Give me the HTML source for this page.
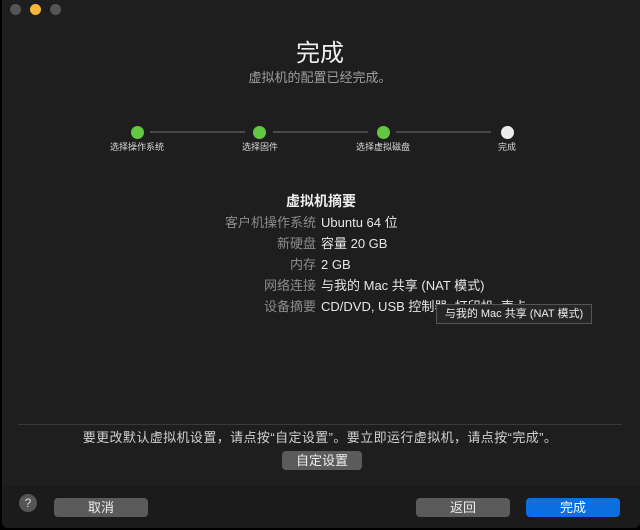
<!DOCTYPE html>
<html><head><meta charset="utf-8"><style>
body{margin:0;width:640px;height:530px;background:#000;overflow:hidden;font-family:"Liberation Sans","Noto Sans CJK SC",sans-serif;}
.win{position:absolute;left:2px;top:0;width:638px;height:528px;background:#1e1e1e;border-radius:0 0 6px 6px;}
.a{position:absolute;white-space:nowrap;}
.dot{position:absolute;width:13px;height:13px;border-radius:50%;background:#62c843;}
.ln{position:absolute;height:2px;background:#4a4a4a;top:131px;}
.sl{position:absolute;font-size:9px;color:#d8d8d8;top:141px;width:100px;text-align:center;line-height:12px;}
.lb,.vl{position:absolute;font-size:13px;line-height:16px;white-space:nowrap;}
.lb{right:324px;color:#8c8c8c;}
.vl{left:321px;color:#e6e6e6;}
.btn{position:absolute;height:19px;border-radius:4px;background:#5b5b5b;color:#eee;font-size:13px;text-align:center;line-height:19px;}
</style></head><body>
<div class="win">
<div style="position:absolute;left:0;top:486px;width:638px;height:42px;background:#1b1b1b;border-radius:0 0 6px 6px"></div>
</div>
<div class="a" style="left:10px;top:4px;width:11px;height:11px;border-radius:50%;background:#555"></div>
<div class="a" style="left:30px;top:4px;width:11px;height:11px;border-radius:50%;background:#f6b73c"></div>
<div class="a" style="left:50px;top:4px;width:11px;height:11px;border-radius:50%;background:#555"></div>

<div class="a" style="left:0;width:640px;text-align:center;top:38px;font-size:24px;line-height:32px;color:#eee">完成</div>
<div class="a" style="left:0;width:640px;text-align:center;top:70px;font-size:13px;line-height:16px;color:#9e9e9e">虚拟机的配置已经完成。</div>

<div class="ln" style="left:150px;width:95px"></div>
<div class="ln" style="left:273px;width:95px"></div>
<div class="ln" style="left:396px;width:95px"></div>
<div class="dot" style="left:131px;top:126px"></div>
<div class="dot" style="left:253px;top:126px"></div>
<div class="dot" style="left:377px;top:126px"></div>
<div class="dot" style="left:501px;top:126px;background:#ececec"></div>
<div class="sl" style="left:87px">选择操作系统</div>
<div class="sl" style="left:210px">选择固件</div>
<div class="sl" style="left:333px">选择虚拟磁盘</div>
<div class="sl" style="left:457px">完成</div>

<div class="a" style="left:0;width:642px;text-align:center;top:192px;font-size:14px;line-height:18px;font-weight:bold;color:#eee">虚拟机摘要</div>
<div class="lb" style="top:215px">客户机操作系统</div><div class="vl" style="top:215px">Ubuntu 64 位</div>
<div class="lb" style="top:236px">新硬盘</div><div class="vl" style="top:236px">容量 20 GB</div>
<div class="lb" style="top:257px">内存</div><div class="vl" style="top:257px">2 GB</div>
<div class="lb" style="top:278px">网络连接</div><div class="vl" style="top:278px">与我的 Mac 共享 (NAT 模式)</div>
<div class="lb" style="top:299px">设备摘要</div><div class="vl" style="top:299px">CD/DVD, USB 控制器, 打印机, 声卡</div>
<div class="a" style="left:436px;top:304px;width:154px;height:18px;background:#262626;border:1px solid #555;font-size:11px;color:#eee;line-height:18px;text-align:center">与我的 Mac 共享 (NAT 模式)</div>

<div class="a" style="left:18px;top:424px;width:604px;height:1px;background:#3a3a3a"></div>
<div class="a" style="left:0;width:640px;text-align:center;top:430px;font-size:13px;line-height:16px;letter-spacing:0.4px;color:#d0d0d0">要更改默认虚拟机设置，请点按“自定设置”。要立即运行虚拟机，请点按“完成”。</div>
<div class="btn" style="left:282px;top:451px;width:80px">自定设置</div>

<div class="a" style="left:19px;top:494px;width:18px;height:18px;border-radius:50%;background:#555;color:#ddd;font-size:12px;text-align:center;line-height:18px">?</div>
<div class="btn" style="left:54px;top:498px;width:94px">取消</div>
<div class="btn" style="left:416px;top:498px;width:94px">返回</div>
<div class="btn" style="left:526px;top:498px;width:94px;background:#0b6fe0;color:#fff">完成</div>
</body></html>
